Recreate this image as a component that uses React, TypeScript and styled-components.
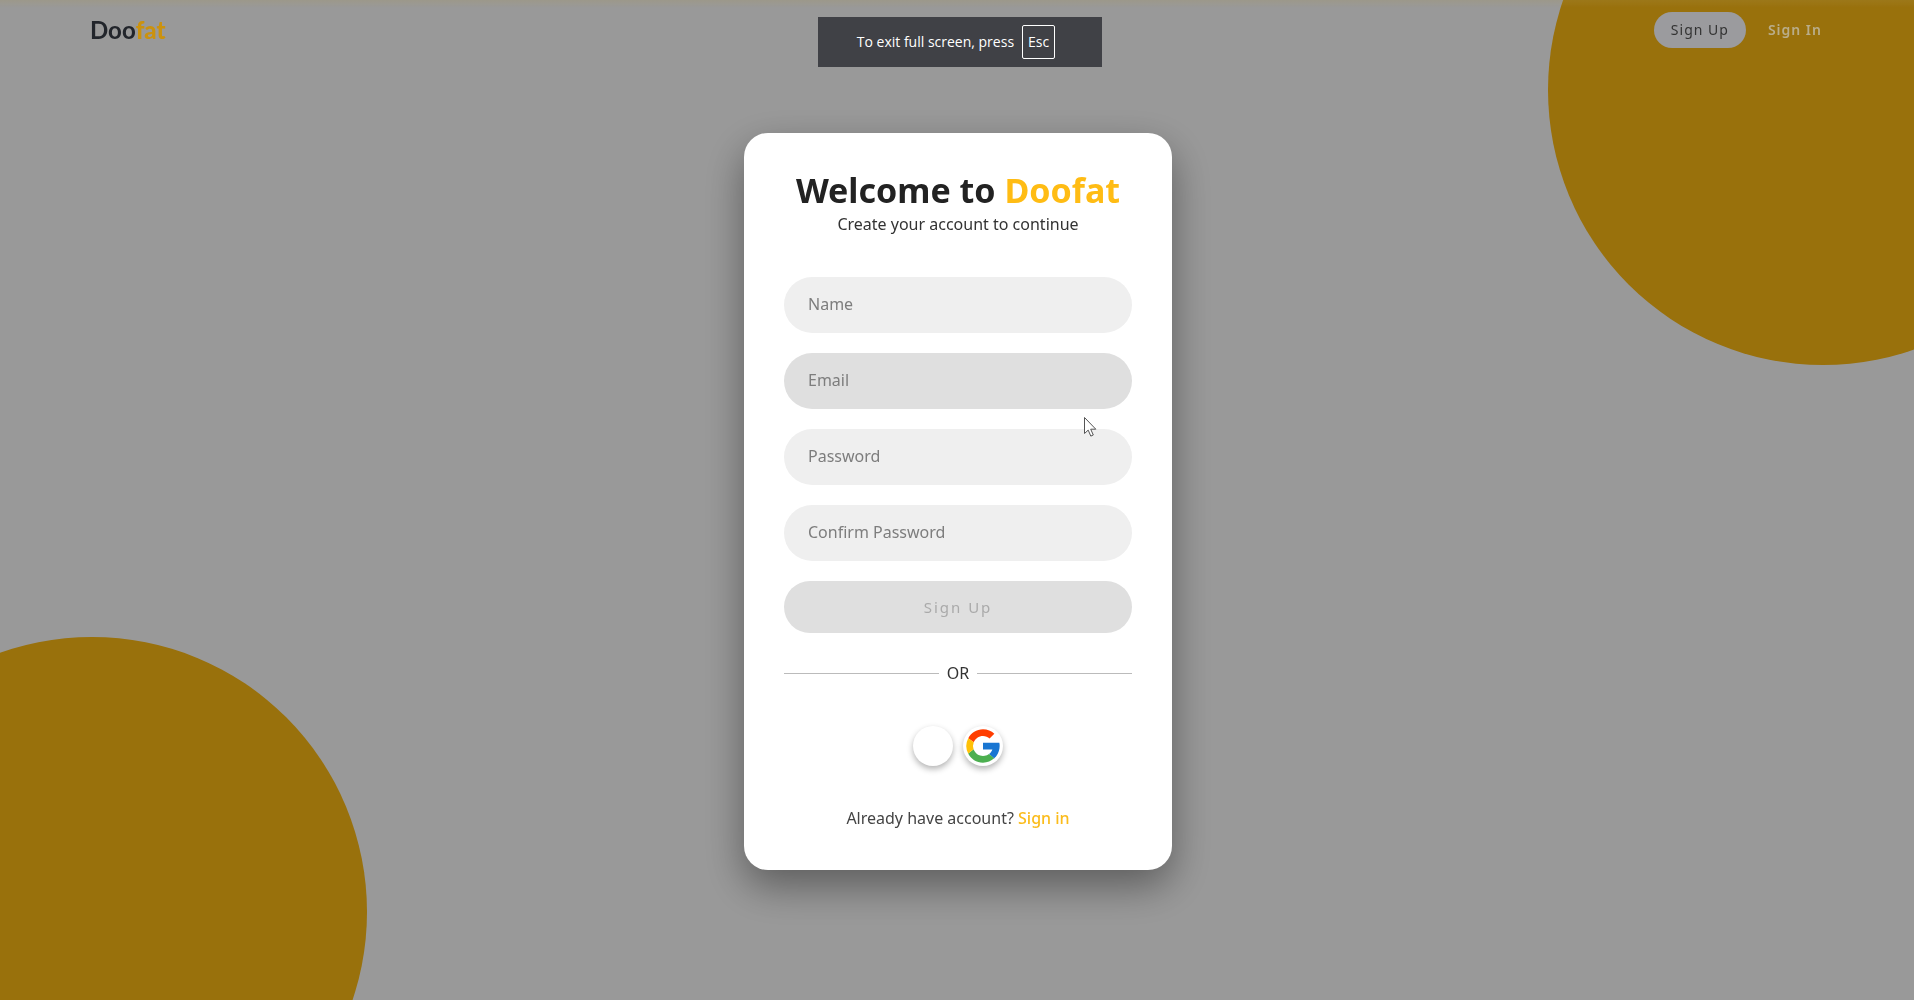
import React from "react";
import styled, { createGlobalStyle } from "styled-components";

const GlobalStyle = createGlobalStyle`
  *, *::before, *::after { box-sizing: border-box; }
  body {
    margin: 0;
    background: #fff;
    color: #222;
    font-family: "Noto Sans", "Open Sans", sans-serif;
    font-size: 16px;
    line-height: 24px;
  }
  button, input { font: inherit; }
`;

const Page = styled.div`
  position: relative;
  min-height: 100vh;
  overflow: hidden;
`;

const Circle = styled.div<{ $corner: "top" | "bottom" }>`
  position: absolute;
  width: 550px;
  height: 550px;
  border-radius: 50%;
  background: #ffbc14;
  ${(p) => (p.$corner === "top" ? "top: -185px; right: -184px;" : "bottom: -187px; left: -183px;")}
`;

const Header = styled.header`
  position: relative;
  z-index: 1;
  display: flex;
  align-items: center;
  justify-content: space-between;
  padding: 12px 92px 12px 90px;
`;

const Logo = styled.a`
  color: #22252b;
  font-family: Lato, sans-serif;
  font-size: 24px;
  font-weight: 700;
  text-decoration: none;

  span { color: #cb920e; font-weight: 900; }
`;

const Nav = styled.nav`
  display: flex;
  align-items: center;
  gap: 22px;
`;

const NavButton = styled.button<{ $filled?: boolean }>`
  height: 36px;
  padding: ${(p) => (p.$filled ? "0 17px" : "0")};
  border: 0;
  border-radius: 18px;
  background: ${(p) => (p.$filled ? "#9b9b9e" : "transparent")};
  color: ${(p) => (p.$filled ? "#333" : "#b9ad8a")};
  font-size: 14px;
  font-weight: ${(p) => (p.$filled ? 400 : 600)};
  letter-spacing: 1px;
`;

const Overlay = styled.div`
  position: fixed;
  inset: 0;
  display: grid;
  place-items: center;
  padding: 3px 0 0 2px;
  background: linear-gradient(rgba(170, 150, 80, 0.2), transparent 8px), rgba(0, 0, 0, 0.4);
`;

const Card = styled.main`
  position: relative;
  width: 428px;
  max-width: 100%;
  padding: 38px 40px 40px;
  border-radius: 24px;
  background: #fff;
  box-shadow: 0 16px 40px rgba(0, 0, 0, 0.4);
  text-align: center;
`;

const Title = styled.h1`
  margin: 0 0 2px;
  font-size: 34px;
  line-height: 38px;
  font-weight: 700;
  white-space: nowrap;

  span { color: #ffbc14; }
`;

const Subtitle = styled.p`
  margin: 0 0 40px;
  color: #333;
  line-height: 26px;
`;

const Form = styled.form`
  display: grid;
  gap: 20px;
`;

const Field = styled.input<{ $active?: boolean }>`
  width: 100%;
  height: 56px;
  padding: 0 24px 2px;
  border: 0;
  border-radius: 28px;
  outline: 0;
  background: ${(p) => (p.$active ? "#dfdfdf" : "#efefef")};

  &::placeholder { color: #7d7d7d; opacity: 1; }
`;

const Submit = styled.button`
  height: 52px;
  padding-bottom: 2px;
  border: 0;
  border-radius: 26px;
  background: #dfdfdf;
  color: #aaa;
  font-size: 15px;
  letter-spacing: 2px;
`;

const Divider = styled.div`
  display: flex;
  align-items: center;
  gap: 8px;
  margin: 28px 0 41px;
  color: #333;

  &::before, &::after {
    content: "";
    flex: 1;
    height: 1px;
    background: #bbb;
  }
`;

const Socials = styled.div`
  display: flex;
  justify-content: center;
  gap: 10px;
`;

const SocialButton = styled.button`
  display: grid;
  place-items: center;
  width: 40px;
  height: 40px;
  padding: 0;
  border: 0;
  border-radius: 50%;
  background: #fff;
  box-shadow: 0 3px 6px rgba(0, 0, 0, 0.3);
`;

const Footer = styled.p`
  margin: 40px 0 0;
  color: #444;

  a { color: #fbbc1c; font-weight: 500; text-decoration: none; }
`;

const Cursor = styled.svg`
  position: absolute;
  top: 284px;
  left: 340px;
  pointer-events: none;
`;

const Notice = styled.div`
  position: fixed;
  z-index: 2;
  top: 17px;
  left: 50%;
  display: flex;
  align-items: center;
  justify-content: center;
  gap: 8px;
  width: 284px;
  height: 50px;
  margin-left: -139px;
  padding-right: 8px;
  background: #404146;
  color: #fff;
  font-family: "Open Sans", "Noto Sans", sans-serif;
  font-size: 14px;
  white-space: nowrap;

  kbd {
    padding: 4px 5px;
    border: 1px solid #fff;
    border-radius: 2px;
    font: inherit;
  }
`;

const fields = [
  { label: "Name", type: "text" },
  { label: "Email", type: "email", active: true },
  { label: "Password", type: "password" },
  { label: "Confirm Password", type: "password" },
];

const GoogleIcon = () => (
  <svg width="40" height="40" viewBox="0 0 48 48" aria-hidden="true">
    <path fill="#1976D2" d="M43.6 20.1H24v8h11.3c-.8 2.2-2.2 4.2-4.1 5.6l6.2 5.2C37 39.2 44 34 44 24c0-1.3-.1-2.7-.4-3.9z" />
    <path fill="#FF3D00" d="m6.3 14.7 6.6 4.8C14.7 15.1 19 12 24 12c3.1 0 5.8 1.2 7.9 3l5.7-5.7C34 6.1 29.3 4 24 4 16.3 4 9.7 8.3 6.3 14.7z" />
    <path fill="#4CAF50" d="M24 44c5.2 0 9.9-2 13.4-5.2l-6.2-5.2A12 12 0 0 1 12.7 28l-6.5 5C9.5 39.6 16.2 44 24 44z" />
    <path fill="#FFC107" d="M6.3 14.7A20 20 0 0 0 6.2 33l6.5-5a12 12 0 0 1 .2-8.5z" />
  </svg>
);

export default function App() {
  return (
    <Page>
      <GlobalStyle />
      <Circle $corner="top" />
      <Circle $corner="bottom" />
      <Header>
        <Logo href="#">Doo<span>fat</span></Logo>
        <Nav>
          <NavButton $filled>Sign Up</NavButton>
          <NavButton>Sign In</NavButton>
        </Nav>
      </Header>
      <Overlay>
        <Card>
          <Title>Welcome to <span>Doofat</span></Title>
          <Subtitle>Create your account to continue</Subtitle>
          <Form onSubmit={(e) => e.preventDefault()}>
            {fields.map((f) => (
              <Field key={f.label} type={f.type} placeholder={f.label} aria-label={f.label} $active={f.active} />
            ))}
            <Submit disabled>Sign Up</Submit>
          </Form>
          <Divider>OR</Divider>
          <Socials>
            <SocialButton aria-label="Continue with another account" />
            <SocialButton aria-label="Continue with Google"><GoogleIcon /></SocialButton>
          </Socials>
          <Footer>Already have account? <a href="#">Sign in</a></Footer>
          <Cursor width="13" height="20" viewBox="0 0 13 20" aria-hidden="true">
            <path d="M.5.5v16l3.7-3.4 2.6 6 2.5-1.1-2.6-5.8h5.1z" fill="#fff" stroke="#555" />
          </Cursor>
        </Card>
      </Overlay>
      <Notice role="status">To exit full screen, press <kbd>Esc</kbd></Notice>
    </Page>
  );
}
